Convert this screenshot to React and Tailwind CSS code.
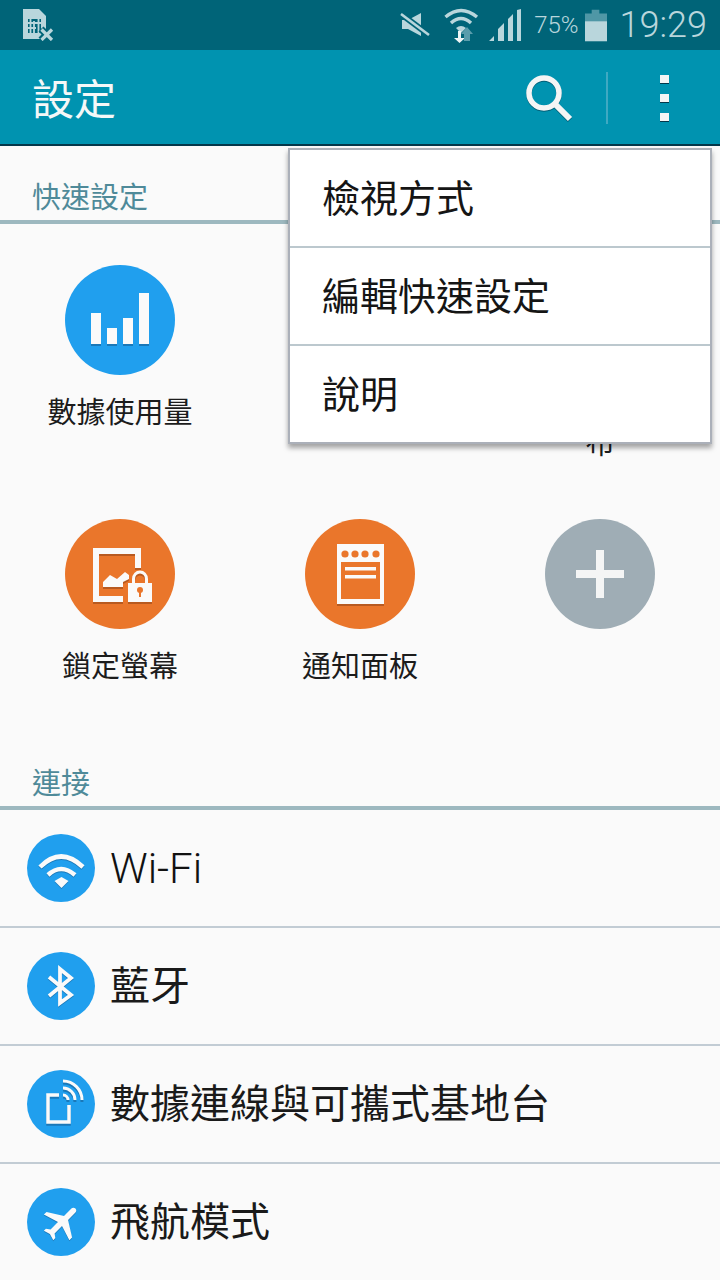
import React from 'react';

const cjk = "font-['Noto_Sans_CJK_TC','Roboto',sans-serif]";

function StatusBar() {
  return (
    <div className="h-[50px] bg-[#006478] flex items-center text-[#b9d6dc] font-['Roboto',sans-serif]">
      <svg className="ml-[23px]" width="31" height="32" viewBox="0 0 31 32" fill="none">
        <path d="M0 0H16L23 7V30H0Z" fill="#b9d6dc" />
        <path d="M5 10H18V24H5Z" fill="#006478" />
        <path d="M7.500 10V24M11 12V24M15.500 10V24M5 14H18M5 19H13" stroke="#b9d6dc" strokeWidth="1.800" />
        <path d="M18 20L29 31M29 20L18 31" stroke="#006478" strokeWidth="7" />
        <path d="M18.500 20.500L29 31M29 20.500L18.500 31" stroke="#b9d6dc" strokeWidth="3.200" />
      </svg>
      <div className="ml-auto flex items-center">
        <svg width="30" height="24" viewBox="0 0 30 24">
          <path d="M2 7H8L21 0V23L8 16H2Z" fill="#b9d6dc" />
          <path d="M1 1L29 22" stroke="#006478" strokeWidth="6" />
          <path d="M1 1L29 22" stroke="#b9d6dc" strokeWidth="2.600" />
        </svg>
        <svg className="ml-[14px]" width="35" height="36" viewBox="0 0 35 36" fill="none">
          <path d="M1.500 10Q17 -3 33 10" stroke="#b9d6dc" strokeWidth="3.400" />
          <path d="M7 16Q17 7 27 16" stroke="#b9d6dc" strokeWidth="3.400" />
          <path d="M12 21Q17 17 22 21L17 26Z" fill="#b9d6dc" />
          <path d="M14 24H17V31H21L15.500 36L10 31H14Z" fill="#eef5f6" />
          <path d="M20 34V27H17L23 20L29 27H26V34Z" fill="#5a9dac" />
        </svg>
        <svg className="ml-[9px]" width="34" height="33" viewBox="0 0 34 33">
          <path d="M1 32L6 27V32ZM10 32V20L16 14V32ZM20 32V10L25 5V32ZM29 32V1L33 0V32Z" fill="#b9d6dc" />
        </svg>
        <span className="ml-[12px] text-[24px] leading-none font-light">75%</span>
        <svg className="ml-[6px]" width="22" height="33" viewBox="0 0 23 33">
          <path d="M7 0H15V4H23V12H0V4H7Z" fill="#4f97a6" />
          <path d="M0 12H23V33H0Z" fill="#b9d6dc" />
        </svg>
        <span className="ml-[13px] mr-[13px] text-[36px] leading-none font-light">19:29</span>
      </div>
    </div>
  );
}

function AppBar() {
  return (
    <div className="h-[96px] bg-[#0093b0] border-b-2 border-[#04374a] flex items-center">
      <h1 className={`${cjk} ml-[32px] text-[42px] leading-none text-[#f4f8f8] mt-[-1px]`}>設定</h1>
      <svg className="ml-auto mt-[1px] drop-shadow-[0_1px_0_rgba(0,60,80,0.6)]" width="48" height="48" viewBox="0 0 48 48" fill="none">
        <circle cx="19" cy="19" r="15" stroke="#f4f5f5" strokeWidth="5.500" />
        <path d="M29.500 29.500L45 45" stroke="#f4f5f5" strokeWidth="6" />
      </svg>
      <div className="ml-[33px] mt-[2px] w-[2px] h-[52px] bg-[#3fa9c2]" />
      <div className="ml-[52px] mr-[51px] mt-[2px] flex flex-col gap-[11px]">
        <div className="w-[9px] h-[8px] bg-[#f4f5f5] shadow-[0_1px_0_#04374a]" />
        <div className="w-[9px] h-[8px] bg-[#f4f5f5] shadow-[0_1px_0_#04374a]" />
        <div className="w-[9px] h-[8px] bg-[#f4f5f5] shadow-[0_1px_0_#04374a]" />
      </div>
    </div>
  );
}

function SectionHeader({ title, height }) {
  return (
    <div className={`${height} border-b-4 border-[#9db8bf] flex items-end`}>
      <span className={`${cjk} ml-[32px] mb-[10px] text-[29px] leading-none text-[#4f8a99]`}>{title}</span>
    </div>
  );
}

function DataIcon() {
  return (
    <svg className="w-full h-full drop-shadow-[0_2px_0_#1a78b8]" viewBox="0 0 110 110" fill="#fafafa">
      <rect x="26" y="48" width="10" height="31" />
      <rect x="42" y="63" width="10" height="16" />
      <rect x="58" y="53" width="10" height="26" />
      <rect x="74" y="28" width="10" height="51" />
    </svg>
  );
}

function LockIcon() {
  return (
    <svg className="w-full h-full drop-shadow-[0_2px_0_#b85a20]" viewBox="0 0 110 110" fill="#fafafa">
      <path d="M28 29H76V49H70V35H34V77H58V83H28Z" />
      <path d="M38 63L45 56L52 60L60 53L64 56V60L58 63V68H38Z" />
      <path fillRule="evenodd" d="M63 64H67V60A8 8.500 0 0 1 83 60V64H87V83H63ZM70 64H80V60A5 5.500 0 0 0 70 60Z" />
      <circle cx="75" cy="71" r="3" fill="#ea762b" />
      <rect x="74" y="71" width="2" height="7" fill="#ea762b" />
    </svg>
  );
}

function NotifIcon() {
  return (
    <svg className="w-full h-full drop-shadow-[0_2px_0_#b85a20]" viewBox="0 0 110 110" fill="#fafafa">
      <rect x="32" y="25" width="47" height="60" />
      <rect x="36" y="43" width="39" height="37" fill="#ea762b" />
      <rect x="40" y="48" width="31" height="3.500" />
      <rect x="40" y="56" width="31" height="3.500" />
      <circle cx="40" cy="35" r="3.600" fill="#ea762b" />
      <circle cx="50" cy="35" r="3.600" fill="#ea762b" />
      <circle cx="60" cy="35" r="3.600" fill="#ea762b" />
      <circle cx="71" cy="35" r="3.600" fill="#ea762b" />
    </svg>
  );
}

function PlusIcon() {
  return (
    <svg className="w-full h-full" viewBox="0 0 110 110" fill="#f4f5f5">
      <rect x="31" y="51" width="48" height="8" />
      <rect x="51" y="31" width="8" height="48" />
    </svg>
  );
}

function QuickItem({ label, bg, children }) {
  return (
    <div className="h-[254px] pt-[42px] flex flex-col items-center">
      <div className={`w-[110px] h-[110px] rounded-full shrink-0 ${bg}`}>{children}</div>
      <div className={`${cjk} mt-[18px] text-[29px] leading-[35px] text-[#1c1c1c] text-center whitespace-nowrap`}>{label}</div>
    </div>
  );
}

function WifiIcon() {
  return (
    <svg className="w-full h-full drop-shadow-[0_1px_0_#1a78b8]" viewBox="0 0 68 68" fill="none" stroke="#fafafa" strokeWidth="4.500">
      <path d="M13 33Q34 12 56 33" />
      <path d="M21 41Q34 29 48 41" />
      <path d="M27.500 47L34.500 43L41.500 47L34.500 54Z" fill="#fafafa" stroke="none" />
    </svg>
  );
}

function BluetoothIcon() {
  return (
    <svg className="w-full h-full drop-shadow-[0_1px_0_#1a78b8]" viewBox="0 0 68 68" fill="none" stroke="#fafafa" strokeWidth="3.800">
      <path d="M22 25L44 43L33 51V17L44 26L22 44" />
    </svg>
  );
}

function HotspotIcon() {
  return (
    <svg className="w-full h-full drop-shadow-[0_2px_0_#1a78b8]" viewBox="0 0 68 68" fill="none" stroke="#fafafa">
      <path d="M32 25H21V52H42V35" strokeWidth="3.500" />
      <path d="M36 11A19 19 0 0 1 55 30" strokeWidth="3" />
      <path d="M36 18A12 12 0 0 1 48 30" strokeWidth="3" />
      <path d="M36 25A5 5 0 0 1 41 30" strokeWidth="3" />
    </svg>
  );
}

function PlaneIcon() {
  return (
    <svg className="w-full h-full drop-shadow-[0_1px_0_#1a78b8]" viewBox="0 0 68 68">
      <path
        transform="translate(35 34) rotate(45) scale(1.9) translate(-11.500 -12)"
        fill="#fafafa"
        d="M21 16v-2l-8-5V3.500c0-.83-.67-1.500-1.500-1.500S10 2.670 10 3.500V9l-8 5v2l8-2.500V19l-2 1.500V22l3.500-1 3.500 1v-1.500L13 19v-5.500l8 2.500z"
      />
    </svg>
  );
}

function ListRow({ label, icon, latin, last }) {
  return (
    <div className={`h-[118px] pl-[27px] flex items-center ${last ? 'pb-[2px]' : 'border-b-2 border-[#c2ccd4]'}`}>
      <div className="w-[68px] h-[68px] rounded-full bg-[#209fee] shrink-0">{icon}</div>
      {latin
        ? <span className="font-['Roboto',sans-serif] font-light ml-[15px] text-[42px] leading-none text-[#111111] mt-[1px]">{label}</span>
        : <span className={`${cjk} ml-[15px] text-[40px] leading-none text-[#1a1a1a] mt-[-7px]`}>{label}</span>}
    </div>
  );
}

function OverflowMenu() {
  const items = ['檢視方式', '編輯快速設定', '說明'];
  return (
    <div className="absolute left-[288px] top-[148px] w-[424px] bg-white border-2 border-[#abb0b9] shadow-[0_4px_5px_rgba(0,0,0,0.35)] divide-y-2 divide-[#bcc8ce]">
      {items.map(t => (
        <div key={t} className={`${cjk} h-[98px] last:h-[96px] flex items-center pl-[32px] pb-[5px] text-[38px] leading-none text-[#151515]`}>{t}</div>
      ))}
    </div>
  );
}

export default function App() {
  return (
    <div className="relative w-[720px] h-[1280px] overflow-hidden bg-[#fafafa]">
      <StatusBar />
      <AppBar />
      <SectionHeader title="快速設定" height="h-[78px]" />
      <div className="grid grid-cols-3 -mt-px">
        <QuickItem label="數據使用量" bg="bg-[#209fee]"><DataIcon /></QuickItem>
        <QuickItem label="" bg="bg-[#209fee]" />
        <QuickItem label={<><br /><span className="block -mt-1">布</span></>} bg="bg-[#209fee]" />
        <QuickItem label="鎖定螢幕" bg="bg-[#ea762b]"><LockIcon /></QuickItem>
        <QuickItem label="通知面板" bg="bg-[#ea762b]"><NotifIcon /></QuickItem>
        <QuickItem label="" bg="bg-[#9fadb5]"><PlusIcon /></QuickItem>
      </div>
      <SectionHeader title="連接" height="h-[79px]" />
      <ListRow label="Wi-Fi" icon={<WifiIcon />} latin />
      <ListRow label="藍牙" icon={<BluetoothIcon />} />
      <ListRow label="數據連線與可攜式基地台" icon={<HotspotIcon />} />
      <ListRow label="飛航模式" icon={<PlaneIcon />} last />
      <OverflowMenu />
    </div>
  );
}
